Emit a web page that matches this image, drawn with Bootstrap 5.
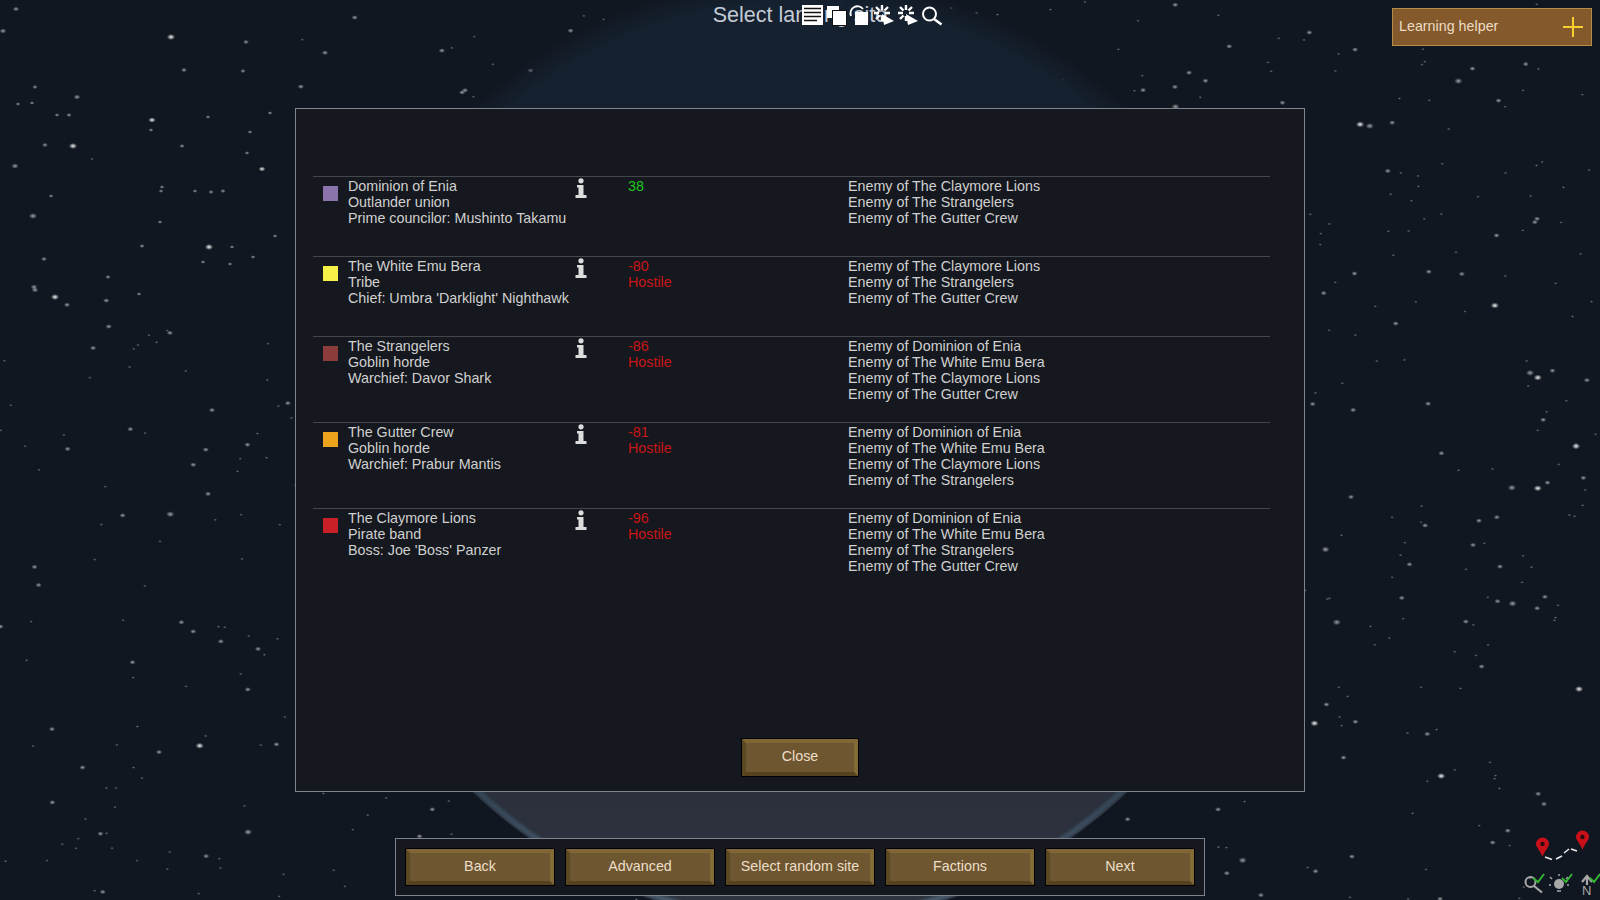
<!doctype html>
<html lang="en">
<head>
<meta charset="utf-8">
<title>Select landing site</title>
<link href="https://cdn.jsdelivr.net/npm/bootstrap@5.3.0/dist/css/bootstrap.min.css" rel="stylesheet">
<style>
html,body{height:100%;overflow:hidden}
body{background:#111720;font-family:"Liberation Sans",Arial,sans-serif;font-size:14.3px;line-height:16px;color:#d0d0d0}
.sky{position:absolute;inset:0;width:1600px;height:900px}
.stage{position:relative;width:1600px;height:900px}
.page-title{height:30px;font-size:21.5px;line-height:30px;color:#c3cbd5}
.tool-icons{position:absolute;left:800px;top:3px}
.tool-icons svg{display:block;width:24px;height:24px}
.helper{position:absolute;left:1392px;top:8px;width:200px;height:38px;background:#84592b;border:1px solid #b58d4b;color:#ecdcc6;padding:0 6px}
.helper-label{margin-bottom:3px}
.dialog-box{width:1010px;height:684px;margin-top:78px;background:#15181e;border:1px solid #7d848c;padding:67px 17px 14px 17px}
.rows-wrap{width:957px}
.faction{border-top:1px solid #43464b;min-height:80px;padding:1px 0 20px}
.faction-4{min-height:86px}
.swatch{width:15px;height:15px;margin:8px 10px 0 10px;flex:none}
.who{width:222px;flex:none;white-space:nowrap}
.info-col{width:58px;flex:none;padding:0 0 0 5px}
.goodwill{width:220px;flex:none}
.friendly{color:#1fc71f}
.hostile{color:#c91616}
.bevel-btn{box-sizing:border-box;display:flex;align-items:center;justify-content:center;border-radius:0;color:#ecdfca;font-size:14.3px;line-height:16px;background:#6e5630;border-style:solid;border-width:5px;border-color:#816736 #846a37 #56421f #5a4723;outline:1px solid #000;outline-offset:-1px;padding:0 0 3px}
.bevel-btn:hover{background:#6e5630;color:#ecdfca;border-color:#816736 #846a37 #56421f #5a4723}
.close-btn{width:118px;height:39px}
.wide-btn{width:150px;height:38px}
.bottom-bar{width:810px;height:58px;margin-top:46px;background:#15181e;border:1px solid #7d848c;padding:9px 9px;gap:10px}
.map-icons{position:absolute;left:1490px;top:820px;width:110px;height:80px}
</style>
</head>
<body class="m-0">
<div class="stage d-flex flex-column align-items-center">
  <svg class="sky" id="sky" viewBox="0 0 1600 900" aria-hidden="true">
    <defs>
      <linearGradient id="planetFill" x1="0" y1="0" x2="0" y2="1">
        <stop offset="0" stop-color="#15212f"/><stop offset=".55" stop-color="#18212f"/><stop offset=".85" stop-color="#2b303c"/><stop offset="1" stop-color="#2e3440"/>
      </linearGradient>
      <radialGradient id="softEdge" cx="800" cy="449" r="476" gradientUnits="userSpaceOnUse">
        <stop offset=".94" stop-color="#fff"/><stop offset="1" stop-color="#000"/>
      </radialGradient>
      <mask id="planetMask" maskUnits="userSpaceOnUse" x="0" y="-100" width="1600" height="1100">
        <rect x="0" y="-100" width="1600" height="450" fill="url(#softEdge)"/>
        <rect x="0" y="350" width="1600" height="650" fill="#fff"/>
      </mask>
      <linearGradient id="rim" gradientUnits="userSpaceOnUse" x1="0" y1="600" x2="0" y2="921">
        <stop offset="0" stop-color="#1d2a3a" stop-opacity="0"/><stop offset=".5" stop-color="#2f4152"/><stop offset="1" stop-color="#4d6174"/>
      </linearGradient>
      <filter id="rimBlur" x="-10%" y="-10%" width="120%" height="120%"><feGaussianBlur stdDeviation="1.800"/></filter>
      <radialGradient id="glow"><stop offset="0" stop-color="#fff"/><stop offset=".3" stop-color="#fff" stop-opacity=".65"/><stop offset="1" stop-color="#fff" stop-opacity="0"/></radialGradient>
    </defs>
    <rect width="1600" height="900" fill="#111720"/>
    <g id="stars"></g>
    <circle cx="800" cy="449" r="474" fill="url(#planetFill)" mask="url(#planetMask)"/>
    <circle cx="800" cy="449" r="470" fill="none" stroke="url(#rim)" stroke-width="5" filter="url(#rimBlur)"/>
  </svg>

  <div class="page-title position-relative text-center">Select landing site</div>
  <div class="tool-icons d-flex">
    <svg viewBox="0 0 24 24"><rect x="2" y="2" width="21" height="20" fill="#fff"/><path d="M4 5.500h17M4 9.500h17M4 13.500h17M4 17.500h13" stroke="#111" stroke-width="1.600"/></svg>
    <svg viewBox="0 0 24 24"><rect x="3" y="3" width="12" height="12" fill="#fff"/><rect x="8.500" y="7.500" width="14" height="15" fill="#fff" stroke="#111"/></svg>
    <svg viewBox="0 0 24 24"><path d="M3 13a7 7 0 0 1 12-7" fill="none" stroke="#fff" stroke-width="1.800"/><rect x="7" y="9" width="13" height="13" fill="#fff"/></svg>
    <svg viewBox="0 0 24 24"><g stroke="#fff" stroke-width="2.400"><path d="M10 2v5M10 13v5M2 10h5M13 10h5M4 4l3.500 3.500M16 4l-3.500 3.500M4 16l3.500-3.500"/></g><path d="M10 11l12 7-10 4z" fill="#fff"/></svg>
    <svg viewBox="0 0 24 24"><g stroke="#fff" stroke-width="2.400"><path d="M10 2v5M10 13v5M2 10h5M13 10h5M4 4l3.500 3.500M16 4l-3.500 3.500M4 16l3.500-3.500"/></g><path d="M10 11l12 7-10 4z" fill="#fff"/></svg>
    <svg viewBox="0 0 24 24"><circle cx="9.500" cy="11" r="6.500" fill="none" stroke="#fff" stroke-width="2"/><path d="M14 16l7.500 5.500" stroke="#fff" stroke-width="2.600"/></svg>
  </div>

  <div class="helper d-flex align-items-center justify-content-between">
    <span class="helper-label">Learning helper</span>
    <svg width="24" height="24" viewBox="0 0 24 24"><path d="M12 2v20M2 12h20" stroke="#f7cf2c" stroke-width="2"/></svg>
  </div>

  <div class="dialog-box position-relative d-flex flex-column">
    <div id="rows" class="rows-wrap"></div>
    <button class="bevel-btn close-btn btn mt-auto align-self-center" type="button">Close</button>
  </div>

  <div class="bottom-bar position-relative d-flex">
    <button class="bevel-btn wide-btn btn" type="button">Back</button>
    <button class="bevel-btn wide-btn btn" type="button">Advanced</button>
    <button class="bevel-btn wide-btn btn" type="button">Select random site</button>
    <button class="bevel-btn wide-btn btn" type="button">Factions</button>
    <button class="bevel-btn wide-btn btn" type="button">Next</button>
  </div>

  <svg class="map-icons" viewBox="0 0 110 80">
    <path d="M52.500 37c-2-6-6.500-10-6.500-13a6.500 6.500 0 0 1 13 0c0 3-4.500 7-6.500 13z" fill="#c8101a"/><circle cx="52.500" cy="24" r="2.200" fill="#2a0c0e"/>
    <path d="M92.500 30c-2-6-6.500-10-6.500-13a6.500 6.500 0 0 1 13 0c0 3-4.500 7-6.500 13z" fill="#c8101a"/><circle cx="92.500" cy="17" r="2.200" fill="#2a0c0e"/>
    <path d="M55 37l7 2.500M66 39l6-3M74 33l5-4M81 29l6 2" stroke="#e8e8e8" stroke-width="1.600" fill="none"/>
    <circle cx="40.500" cy="62" r="5" fill="none" stroke="#a8a8a8" stroke-width="2"/><path d="M44 66l8 6.500" stroke="#a8a8a8" stroke-width="2.200"/>
    <circle cx="69" cy="64" r="5" fill="#a8a8a8"/><path d="M67 71h4M62 59l-2-2M76 59l2-2M69 56v-2M61 65h-2M77 65h2" stroke="#a8a8a8" stroke-width="1.400"/>
    <path d="M97 65V57M92 62l5-6 5 6" stroke="#a8a8a8" stroke-width="2.200" fill="none"/><text x="92" y="75" font-size="13" fill="#a8a8a8" font-family="Liberation Sans">N</text>
    <path d="M43 58l5 4 6-8M72 58l4 4 6-8M100 58l4 4 6-8" stroke="#34b334" stroke-width="2" fill="none"/>
  </svg>
</div>

<script>
const factions=[
 {c:"#8b73ac",l:["Dominion of Enia","Outlander union","Prime councilor: Mushinto Takamu"],g:"38",e:["The Claymore Lions","The Strangelers","The Gutter Crew"]},
 {c:"#f6f146",l:["The White Emu Bera","Tribe","Chief: Umbra 'Darklight' Nighthawk"],g:"-80",e:["The Claymore Lions","The Strangelers","The Gutter Crew"]},
 {c:"#8d3c3c",l:["The Strangelers","Goblin horde","Warchief: Davor Shark"],g:"-86",e:["Dominion of Enia","The White Emu Bera","The Claymore Lions","The Gutter Crew"]},
 {c:"#eea31d",l:["The Gutter Crew","Goblin horde","Warchief: Prabur Mantis"],g:"-81",e:["Dominion of Enia","The White Emu Bera","The Claymore Lions","The Strangelers"]},
 {c:"#c91f26",l:["The Claymore Lions","Pirate band","Boss: Joe 'Boss' Panzer"],g:"-96",e:["Dominion of Enia","The White Emu Bera","The Strangelers","The Gutter Crew"]}
];
const info='<svg width="12" height="21" viewBox="0 0 12 21"><circle cx="6" cy="2.800" r="2.600" fill="#ddd"/><path d="M2 7h6.500v10H11.500v3H.5v-3H3.500V9.500H2z" fill="#ddd"/></svg>';
document.getElementById("rows").innerHTML=factions.map(f=>`
 <div class="faction d-flex ${f.e.length>3?'faction-4':''}">
  <div class="swatch" style="background:${f.c}"></div>
  <div class="who">${f.l.map(t=>`<div>${t}</div>`).join("")}</div>
  <div class="info-col">${info}</div>
  <div class="goodwill ${f.g>0?'friendly':'hostile'}"><div>${f.g}</div>${f.g>0?'':'<div>Hostile</div>'}</div>
  <div>${f.e.map(t=>`<div>Enemy of ${t}</div>`).join("")}</div>
 </div>`).join("");
let seed=73421;const r=()=>(seed=(seed*16807)%2147483647)/2147483647;
const hand=[[16,9,1.4],[3,31,1.5],[171,37,1.8,1],[246,42,1.3],[184,70,1.3],[243,71,1.2],[35,87,1.2],[77,97,1.5],[32,103,1.1],[18,104,1.1],[57,115,1.1],[69,115,1.2],[152,120,1.6,1],[151,130,1.1],[208,117,1.1],[270,113,1.1],[250,132,1.1],[45,145,1.3],[73,146,1.8,1],[182,146,1.2],[247,153,1.1],[15,166,1.6],[92,159,.8],[262,169,1.5,1],[162,187,1.1],[195,191,1.1],[161,191,1.1],[51,196,1.1],[223,191,1.2],[211,192,1.2],[33,216,1.8],[160,222,1.1],[142,246,1.2],[209,247,1.8,1],[232,247,1.1],[44,259,1.3],[108,277,1.2],[34,287,1.5],[139,294,1.1],[55,297,1.8,1],[35,290,1.5],[230,264,1.1],[253,257,1.1],[203,262,1.1],[275,236,1.1]];
function star(x,y,a,b){return `<ellipse cx="${x}" cy="${y}" rx="${a*2.3}" ry="${a*1.7}" fill="url(#glow)" opacity="${b?1:(a<1?.4:.62)}"/>`}
let out=hand.map(s=>star(...s));
for(let i=0;i<1000;i++){const x=r()*1600,y=r()*900;if(x<300&&y<300)continue;const k=r();out.push(star(x,y,k<.6?.8:k<.95?1.4:1.8,k>.975))}
document.getElementById("stars").innerHTML=out.join("");
</script>
<script src="https://cdn.jsdelivr.net/npm/bootstrap@5.3.0/dist/js/bootstrap.bundle.min.js"></script>
</body>
</html>
